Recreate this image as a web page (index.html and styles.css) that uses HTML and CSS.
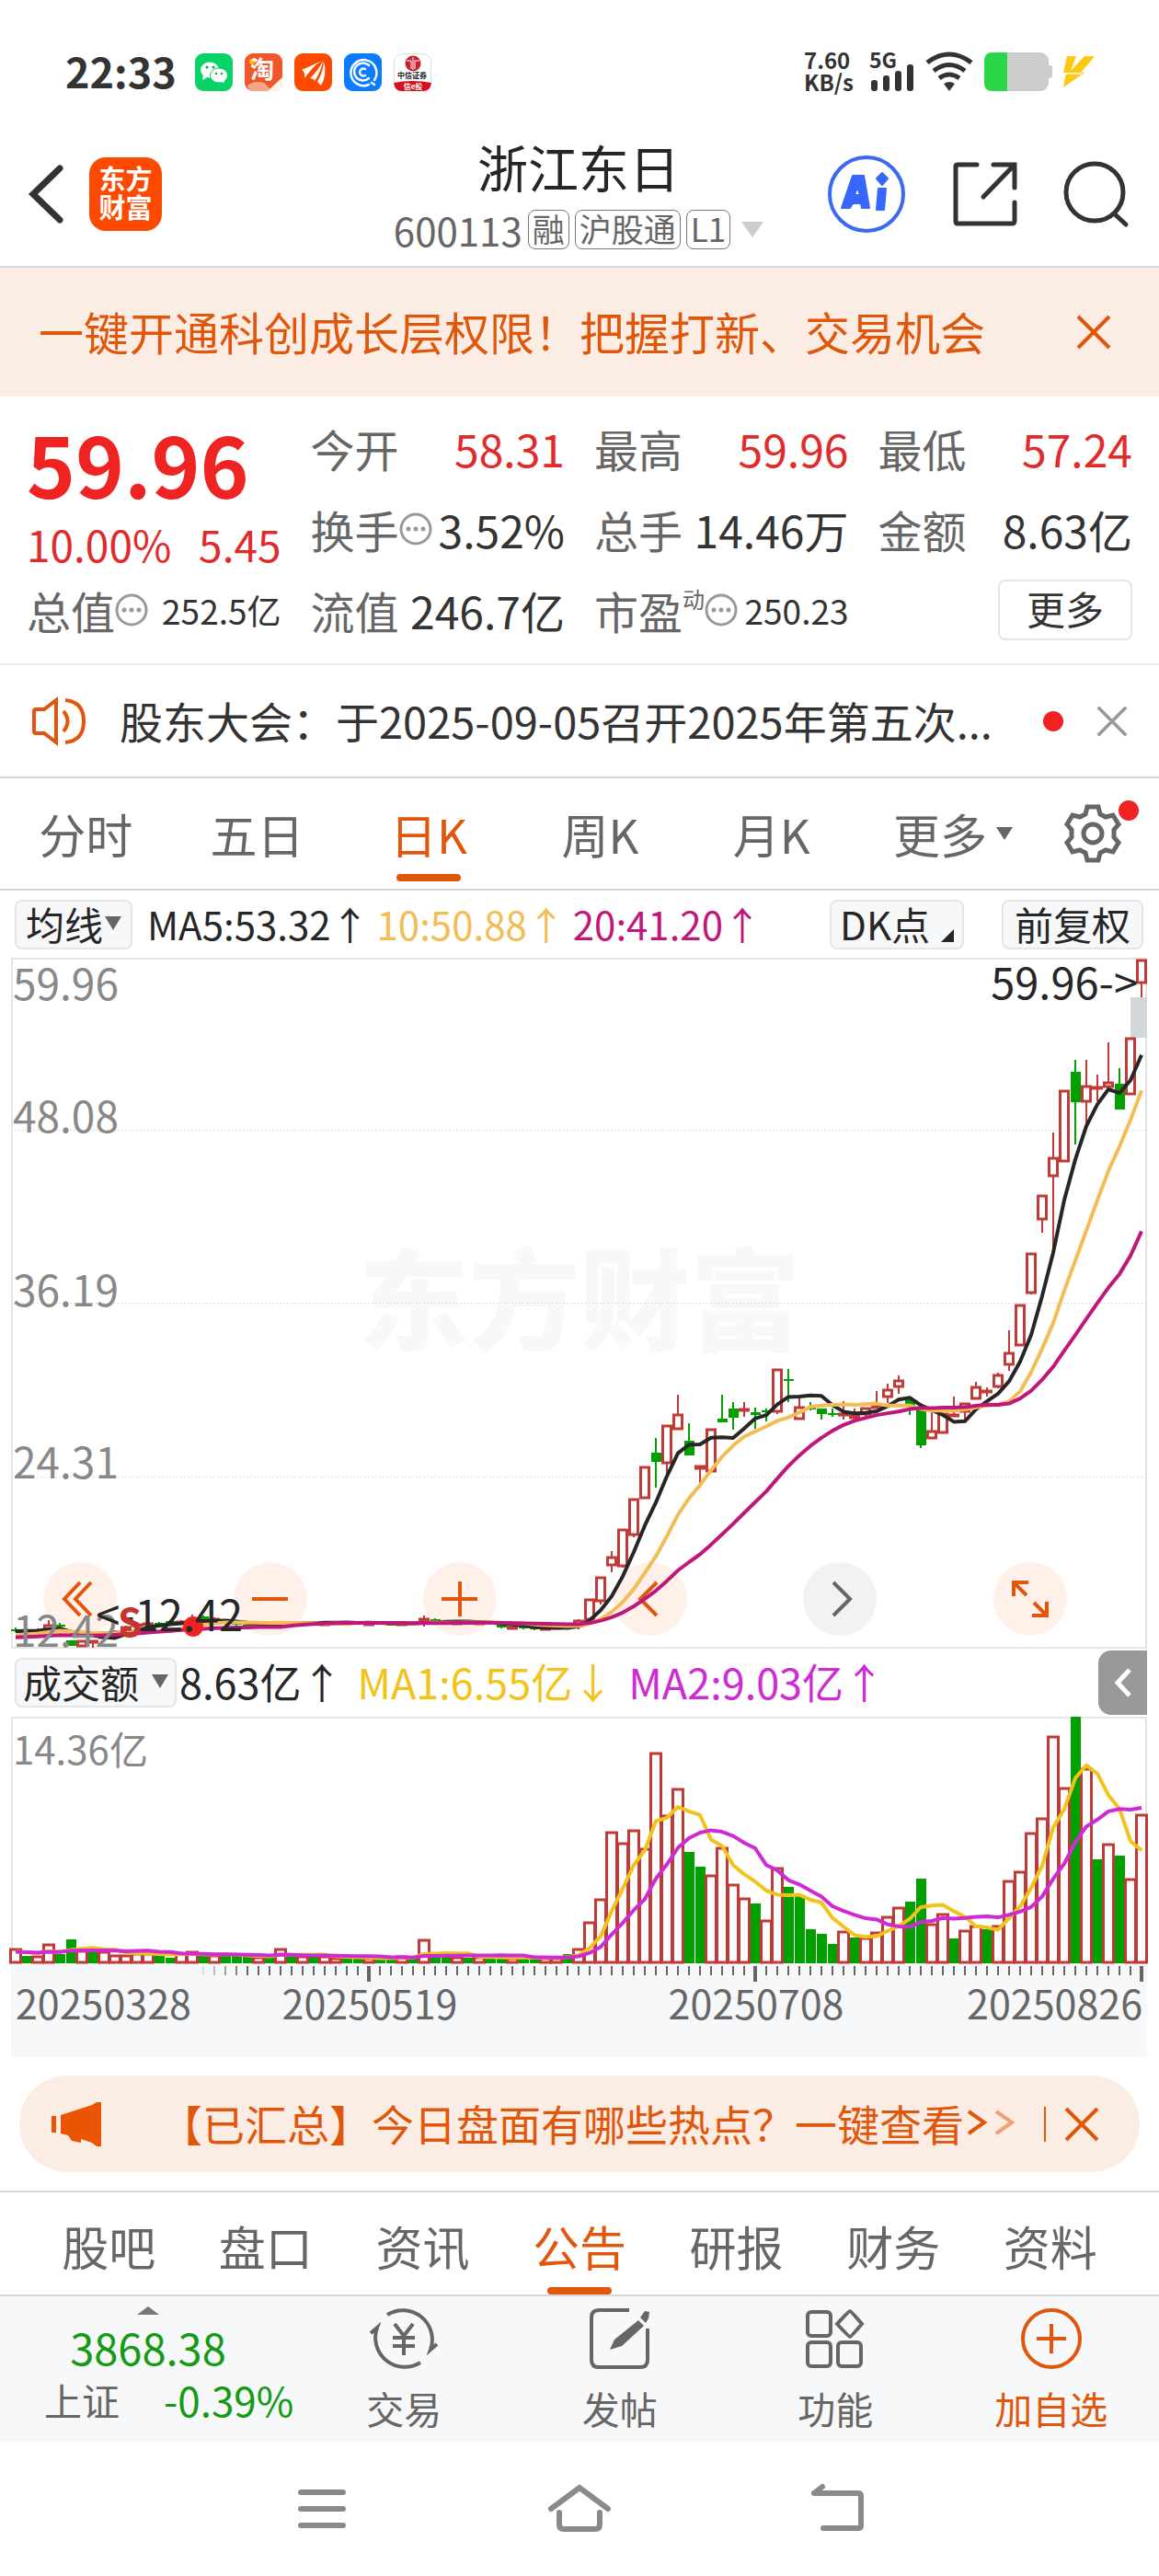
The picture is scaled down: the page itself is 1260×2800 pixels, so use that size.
FILE: index.html
```html
<!DOCTYPE html>
<html lang="zh-CN">
<head>
  <meta charset="UTF-8">
  <meta name="viewport" content="width=device-width, initial-scale=1.0">
  <title>浙江东日 600113</title>
  <link rel="stylesheet" href="styles.css">
</head>
<body>
  <svg class="defs" aria-hidden="true">
    <symbol id="close" viewBox="0 0 38 38"><path d="M2 2 36 36M36 2 2 36"/></symbol>
    <symbol id="dots" viewBox="0 0 36 36">
      <circle cx="18" cy="18" r="16" fill="none" stroke="#999" stroke-width="3"/>
      <g fill="#999"><circle cx="10" cy="18" r="2.500"/><circle cx="18" cy="18" r="2.500"/><circle cx="26" cy="18" r="2.500"/></g>
    </symbol>
  </svg>

  <!-- 状态栏 -->
  <div class="status">
    <span class="clock">22:33</span>
    <div class="apps">
      <svg viewBox="0 0 41 41">
        <rect width="41" height="41" rx="9" fill="#07d367"/>
        <ellipse cx="16" cy="18" rx="10" ry="8.500" fill="#fff"/><path d="M9 23 8 29 15 25Z" fill="#fff"/>
        <ellipse cx="26" cy="24" rx="9.500" ry="8" fill="#fff" stroke="#07d367"/><path d="m28 31 4 1-1-4Z" fill="#fff"/>
        <g fill="#07a555"><circle cx="13" cy="15" r="1.500"/><circle cx="20" cy="15" r="1.500"/><circle cx="23" cy="22" r="1.200"/><circle cx="29" cy="22" r="1.200"/></g>
      </svg>
      <svg viewBox="0 0 41 41">
        <rect width="41" height="41" rx="9" fill="#f0562a"/>
        <path d="M3 35q8-6 18-3l9 9H9q-5 0-6-6Z" fill="#f9a58a"/>
        <path d="M25 41 41 26v6q0 9-9 9Z" fill="#fff3e8"/>
        <circle cx="8" cy="9" r="3" fill="#ffc400"/>
        <text x="19" y="27" class="tao">淘</text>
      </svg>
      <svg viewBox="0 0 41 41">
        <rect width="41" height="41" rx="9" fill="#fd4a00"/>
        <path d="M8 18q9-4 22-10-6 3-11 9T11 27q1-7-3-9ZM17 27q9-8 14-19-2 12-9 22-1-3-5-3ZM25 31q6-10 7-22 4 14-3 26Z" fill="#fff"/>
      </svg>
      <svg viewBox="0 0 41 41">
        <rect width="41" height="41" rx="9" fill="#0a7dff"/>
        <g fill="none" stroke="#fff" stroke-width="2.500" stroke-linecap="round">
          <path d="M33 29a14 14 0 1 0-6 5M30 32l3 2"/><path d="M27 13a9.500 9.500 0 1 0 0 14"/><path d="M23 17a4 4 0 1 0 0 7"/>
        </g>
      </svg>
      <svg viewBox="0 0 41 41">
        <rect x=".5" y=".5" width="40" height="40" rx="9" fill="#fff" stroke="#ddd"/>
        <circle cx="21" cy="11" r="8.500" fill="#c8202c"/>
        <path d="M14 8h5v9M28 8h-5v9M21 4v14" stroke="#fff" fill="none"/>
        <path d="M0 32q20-4 41 0-1 9-9 9H9q-8 0-9-9Z" fill="#d7101c"/>
        <text x="20" y="27" class="zx">中信证券</text>
        <text x="21" y="39" class="zx zx-red">信e投</text>
      </svg>
    </div>
    <div class="net"><span>7.60</span><span>KB/s</span></div>
    <svg class="signal" viewBox="0 0 50 44">
      <text x="0" y="18">5G</text>
      <g fill="#333"><rect x="2" y="31" width="7" height="12" rx="3"/><rect x="15" y="26" width="7" height="17" rx="3"/><rect x="28" y="21" width="7" height="22" rx="3"/><rect x="41" y="14" width="7" height="29" rx="3"/></g>
    </svg>
    <svg class="wifi" viewBox="0 0 52 44" fill="none" stroke="#333" stroke-width="5">
      <path d="M2 12q24-18 48 0M9 21q17-13 34 0M15 29q11-8 22 0"/><path d="M20 35q6-4 12 0l-6 8Z" fill="#333" stroke="none"/>
    </svg>
    <svg class="battery" viewBox="0 0 74 42">
      <rect width="70" height="42" rx="9" fill="#ccc"/><rect x="68" y="14" width="6" height="14" rx="3" fill="#ccc"/>
      <path d="M9 0H25V42H9Q0 42 0 33V9Q0 0 9 0Z" fill="#2bd648"/>
    </svg>
    <svg class="bolt" viewBox="0 0 35 36"><path d="M5 1H15L9 17 24 1H35L20 19H24L1 35 4 19H1Z" fill="#fdc80f"/><path d="M3 20h18" stroke="#fff" stroke-width="1.500"/></svg>
  </div>

  <!-- 标题栏 -->
  <header class="topbar">
    <div class="side">
      <button class="icon-btn" aria-label="返回"><svg class="back" viewBox="0 0 38 64"><path d="M34 4 5 32 34 60" /></svg></button>
      <span class="logo">东方<br>财富</span>
    </div>
    <div class="title">
      <h1>浙江东日</h1>
      <div class="code"><span class="num">600113</span><span class="tag">融</span><span class="tag">沪股通</span><span class="tag">L1</span><i class="tri tri-light"></i></div>
    </div>
    <div class="side side-right">
      <button class="icon-btn" aria-label="AI"><svg class="ai" viewBox="0 0 86 86">
        <circle cx="43" cy="43" r="40" fill="none" stroke="#3d69f0" stroke-width="4"/>
        <path d="M28 23h12l6 35H38l-1-5H28l-3 5H16ZM33 35l-3 9h6Z" fill="#3766ff" stroke="#3766ff" stroke-width="2" stroke-linejoin="round"/>
        <path d="M56 37h8l-2 23H54ZM60 20l6 6-6 7-6-7Z" fill="#3766ff" stroke="#3766ff" stroke-width="2" stroke-linejoin="round"/>
      </svg></button>
      <button class="icon-btn" aria-label="分享"><svg class="share" viewBox="0 0 70 70"><path d="M26 3H5Q3 3 3 5V64Q3 67 5 67H64Q67 67 67 64V44M44 3H67V28M66 4 33 38"/></svg></button>
      <button class="icon-btn" aria-label="搜索"><svg class="search" viewBox="0 0 70 72"><circle cx="33" cy="34" r="31"/><path d="M54 57 67 69"/></svg></button>
    </div>
  </header>

  <div class="banner">
    <a href="#">一键开通科创成长层权限！把握打新、交易机会</a>
    <button class="icon-btn" aria-label="关闭"><svg class="x"><use href="#close"/></svg></button>
  </div>

  <!-- 行情 -->
  <section class="quote">
    <div class="col">
      <div class="price">59.96</div>
      <div class="cell red change"><span>10.00%</span><span>5.45</span></div>
      <div class="cell"><span class="label">总值<svg class="dots"><use href="#dots"/></svg></span><span class="small">252.5亿</span></div>
    </div>
    <div class="col">
      <div class="cell"><span class="label">今开</span><span class="red">58.31</span></div>
      <div class="cell"><span class="label">换手<svg class="dots"><use href="#dots"/></svg></span><span>3.52%</span></div>
      <div class="cell"><span class="label">流值</span><span>246.7亿</span></div>
    </div>
    <div class="col">
      <div class="cell"><span class="label">最高</span><span class="red">59.96</span></div>
      <div class="cell"><span class="label">总手</span><span>14.46万</span></div>
      <div class="cell"><span class="label">市盈<sup>动</sup><svg class="dots"><use href="#dots"/></svg></span><span class="small">250.23</span></div>
    </div>
    <div class="col">
      <div class="cell"><span class="label">最低</span><span class="red">57.24</span></div>
      <div class="cell"><span class="label">金额</span><span>8.63亿</span></div>
      <div class="cell cell-end"><button class="more">更多</button></div>
    </div>
  </section>

  <div class="notice">
    <svg class="speaker" viewBox="0 0 60 52"><path d="M3 15q0-2 2-2H14L27 3V49L14 39H5Q3 39 3 37ZM35 15q9 11 0 22M37 3q20 2 20 23T37 49"/></svg>
    <a href="#">股东大会：于2025-09-05召开2025年第五次...</a>
    <i class="dot"></i>
    <button class="icon-btn" aria-label="关闭"><svg class="x x-gray"><use href="#close"/></svg></button>
  </div>

  <!-- 周期切换 -->
  <nav class="tabs tabs-period">
    <button>分时</button>
    <button>五日</button>
    <button class="active">日K</button>
    <button>周K</button>
    <button>月K</button>
    <button class="tab-more">更多<i class="tri tri-small"></i></button>
    <button class="settings" aria-label="设置">
      <svg viewBox="0 0 64 64"><path d="M26 3H38L40 11 46 14 54 12 60 22 55 28V36L60 42 54 52 46 50 40 53 38 61H26L24 53 18 50 10 52 4 42 9 36V28L4 22 10 12 18 14 24 11Z"/><circle cx="32" cy="32" r="10"/></svg>
      <i class="dot badge"></i>
    </button>
  </nav>

  <section class="chart">
    <div class="legend">
      <button class="chip">均线<i class="tri"></i></button>
      <span class="ma">MA5:53.32↑</span>
      <span class="ma gold">10:50.88↑</span>
      <span class="ma pink">20:41.20↑</span>
      <button class="chip chip-dk">DK点<i class="corner"></i></button>
      <button class="chip chip-fq">前复权</button>
    </div>
    <div class="plot">
      <div class="controls">
        <button aria-label="最早"><svg viewBox="0 0 80 80"><path d="M40 22 23 40 40 58M52 22 35 40 52 58"/></svg></button>
        <button aria-label="缩小"><svg viewBox="0 0 80 80"><path d="M20 40H59"/></svg></button>
        <button aria-label="放大"><svg viewBox="0 0 80 80"><path d="M20 40H59M40 21V59"/></svg></button>
        <button aria-label="向左"><svg viewBox="0 0 80 80"><path d="M47 22 29 40 47 58"/></svg></button>
        <button class="off" aria-label="向右"><svg viewBox="0 0 80 80"><path d="M33 22 51 40 33 58"/></svg></button>
        <button aria-label="全屏"><svg viewBox="0 0 80 80"><path d="M22 37V22H38M23 23 36 36M58 43V58H42M57 57 44 44"/></svg></button>
      </div>
      <svg id="kline" class="kline" viewBox="0 0 1235 750"></svg>
    </div>
    <div class="legend legend-vol">
      <button class="chip chip-vol">成交额<i class="tri"></i></button>
      <span class="ma">8.63亿↑</span>
      <span class="ma yellow">MA1:6.55亿↓</span>
      <span class="ma purple">MA2:9.03亿↑</span>
      <button class="fold" aria-label="展开"><svg viewBox="0 0 20 34"><path d="M17 3 4 17 17 31"/></svg></button>
    </div>
    <svg id="volume" class="volume" viewBox="0 0 1235 370"></svg>
  </section>

  <div class="tip">
    <svg class="horn" viewBox="0 0 54 48"><path d="M0 15H5V33H0ZM10 14 44 3 49 0H54V48H49L44 44 32 40V44L22 42 18 36 10 34Z"/></svg>
    <a href="#">【已汇总】今日盘面有哪些热点？一键查看<svg class="arrows" viewBox="0 0 54 30"><path d="M3 3 20 15 3 27"/><path d="M33 3 50 15 33 27" opacity=".5"/></svg></a>
    <button class="icon-btn" aria-label="关闭"><svg class="x"><use href="#close"/></svg></button>
  </div>

  <nav class="tabs tabs-info">
    <button>股吧</button>
    <button>盘口</button>
    <button>资讯</button>
    <button class="active">公告</button>
    <button>研报</button>
    <button>财务</button>
    <button>资料</button>
  </nav>

  <!-- 底部工具栏 -->
  <footer class="toolbar">
    <a class="index" href="#">
      <i class="tri-up"></i>
      <span class="index-value">3868.38</span>
      <span class="index-row"><span>上证</span><span class="green percent">-0.39%</span></span>
    </a>
    <button><svg viewBox="0 0 76 68"><path d="M20 8A32 32 0 0 1 67 46l7-6M56 60A32 32 0 0 1 9 22L2 28M28 18 38 31 48 18M38 31V52M26 33H50M26 42H50"/></svg>交易</button>
    <button><svg viewBox="0 0 76 68"><path d="M48 3H15Q7 3 7 11V57Q7 65 15 65H60Q68 65 68 57V23"/><path class="solid" d="M58 14 64 20 40 42 27 46 32 35ZM60 11 65 4 70 5 69 12 66 17Z"/></svg>发帖</button>
    <button><svg viewBox="0 0 76 68"><rect x="8" y="5" width="25" height="26" rx="4"/><rect x="8" y="38" width="25" height="26" rx="4"/><rect x="41" y="38" width="25" height="26" rx="4"/><path d="M54 4Q55 4 67 18 55 32 54 32 53 32 40 18 53 4 54 4Z"/></svg>功能</button>
    <button class="orange"><svg viewBox="0 0 76 68"><circle cx="38" cy="34" r="31"/><path d="M22 34H54M38 18V50"/></svg>加自选</button>
  </footer>

  <div class="sysnav">
    <button aria-label="菜单"><svg viewBox="0 0 70 56"><path d="M12 10H58M12 28H58M12 46H58"/></svg></button>
    <button aria-label="主页"><svg viewBox="0 0 70 56"><path d="M4 28 35 5 66 28M13 32V45Q13 50 18 50H52Q57 50 57 45V32"/></svg></button>
    <button aria-label="后退"><svg viewBox="0 0 70 56"><path d="M10 11H58Q61 11 61 14V46Q61 49 58 49H20M10 11 19 4"/></svg></button>
  </div>

  <script>
    // [开, 收, 高, 低, 成交额]，价格为图内纵坐标
    const days = [
      [730,730,728,733,16],[730,732,729,733,8],[732,731,729,733,8],[731,725,720,731,21],[725,727,723,729,10],
      [742,748,742,748,26],[749,742,742,749,14],[743,742,742,750,13],[740,733,733,740,13],[733,732,731,734,9],
      [732,727,726,732,9],[726,724,722,732,11],[725,723,722,728,11],[723,724,722,727,10],[721,725,720,726,6],
      [723,721,720,724,11],[724,719,714,726,13],[716,721,715,722,9],[720,718,717,722,9],[722,724,720,725,8],
      [723,725,722,726,8],[725,726,723,727,8],[727,725,723,728,7],[725,726,724,727,7],[725,722,721,726,16],
      [722,723,722,725,8],[723,722,721,724,8],[722,724,721,725,7],[724,723,722,725,8],[723,722,722,725,6],
      [723,722,721,724,6],[722,724,722,725,5],[724,723,722,725,6],[723,724,722,725,5],[724,725,723,726,5],
      [725,723,722,725,8],[722,724,722,725,6],[723,718,715,727,26],[719,721,718,722,7],[721,723,720,724,8],
      [724,722,721,725,7],[722,723,721,724,6],[723,722,721,724,7],[722,724,721,725,6],[724,728,723,729,6],
      [728,727,726,729,6],[727,728,727,730,6],[728,730,727,731,6],[730,728,727,731,6],[729,727,726,730,6],
      [727,729,726,730,10],[727,720,719,730,16],[720,697,697,720,45],[700,673,673,703,70],[661,651,645,668,143],
      [662,621,621,663,131],[628,588,588,630,145],[588,553,553,588,125],[538,548,522,576,229],[550,508,508,563,161],
      [513,496,475,513,190],[525,541,506,541,121],[556,552,552,576,105],[559,512,512,559,96],[501,505,475,505,126],
      [490,500,483,513,86],[493,490,483,499,71],[494,497,489,512,65],[492,494,490,504,47],[494,447,447,496,104],
      [458,459,447,483,83],[502,488,477,502,74],[489,491,483,492,37],[490,496,490,502,32],[495,497,490,499,21],
      [498,495,482,502,35],[501,497,490,501,28],[497,489,489,498,28],[490,487,471,490,34],[478,469,463,484,51],
      [467,459,454,474,61],[480,487,480,497,67],[491,530,491,533,92],[523,514,492,523,43],[517,495,495,517,54],
      [498,496,477,498,27],[494,484,484,503,36],[480,466,461,480,41],[472,470,467,477,37],[467,453,451,468,41],
      [443,429,405,449,90],[422,377,377,422,100],[365,321,321,366,142],[285,258,258,299,158],[238,217,190,317,247],
      [222,144,144,222,191],[124,157,111,203,268],[157,139,111,180,212],[143,140,127,156,113],[141,135,92,141,130],
      [137,165,120,165,117],[149,87,87,149,92],[28,2,2,43,162]
    ];
    const STEP = 12, START = 5, RED = '#c03a38', GREEN = '#00a000';
    const x = i => START + i * STEP;

    function average(values, n, seed) {
      const all = seed.concat(values);
      return values.map((v, i) => {
        const end = i + seed.length + 1;
        const part = all.slice(end - n, end);
        return part.reduce((a, b) => a + b, 0) / n;
      });
    }
    function line(ys, color) {
      const pts = ys.map((y, i) => `${x(i)},${y.toFixed(1)}`).join(' ');
      return `<polyline points="${pts}" fill="none" stroke="${color}" stroke-width="4" stroke-linejoin="round"/>`;
    }
    // 阳线空心，阴线实心
    function box(i, top, height, up, w) {
      return up
        ? `<rect x="${x(i) - w / 2}" y="${top + 1}" width="${w}" height="${Math.max(height - 2, 1)}" fill="#fff" stroke="${RED}" stroke-width="3"/>`
        : `<rect x="${x(i) - 5}" y="${top}" width="11" height="${Math.max(height, 2)}" fill="${GREEN}"/>`;
    }

    // K线
    function drawKline() {
      const closes = days.map(d => d[1]);
      const seed = Array(15).fill(741).concat([733, 733, 732, 732]);
      let s = '<text x="618" y="418" class="watermark">东方财富</text>';
      [187, 375, 564].forEach(y => s += `<path d="M0 ${y}.5H1235" stroke="#ddd" stroke-dasharray="2 2"/>`);
      s += '<path d="M1 750V1H1234V750Z" fill="none" stroke="#e4e4e4" stroke-width="2"/>';
      s += '<rect x="1217" y="43" width="18" height="44" fill="#d3d7dc"/>';
      days.forEach(([open, close, high, low], i) => {
        const up = close < open, top = Math.min(open, close), h = Math.abs(open - close);
        s += `<path d="M${x(i)} ${high}V${low}" stroke="${up ? RED : GREEN}" stroke-width="2"/>` + box(i, top, h, up, 9);
      });
      s += line(average(closes, 5, seed), '#262626');
      s += line(average(closes, 10, seed), '#f3bc54');
      s += line(average(closes, 20, seed), '#c0187a');
      [['59.96', 46], ['48.08', 190], ['36.19', 379], ['24.31', 566], ['12.42', 749]].forEach(([t, y]) =>
        s += `<text x="2" y="${y}" class="scale">${t}</text>`);
      s += '<circle cx="198" cy="727" r="11" fill="#f02323"/><circle cx="194" cy="730" r="3" fill="#333"/>';
      s += '<text x="252" y="732" class="mark">&lt;-12.42</text><text x="116" y="738" class="sell">S</text>';
      s += '<text x="1225" y="45" class="mark">59.96-&gt;</text>';
      document.getElementById('kline').innerHTML = s;
    }

    // 成交额
    function drawVolume() {
      const vols = days.map(d => d[4]), seed = Array(9).fill(12);
      let s = '<rect y="268" width="1235" height="102" fill="#f7f8fa"/><path d="M1 268V1H1234V268" fill="none" stroke="#e4e4e4" stroke-width="2"/>';
      days.forEach((d, i) => {
        const up = i === 0 || d[1] < days[i - 1][1];
        s += box(i, 268 - d[4], d[4], up, 11);
      });
      s += line(average(vols, 5, seed).map(v => 268 - v), '#f2c31a');
      s += line(average(vols, 10, seed).map(v => 268 - v), '#cf2bd4');
      for (let i = 17; i < days.length; i++) {
        const major = i === 32 || i === 67 || i === 102;
        s += `<path d="M${x(i)} 271V${major ? 288 : 281}" stroke="#666" stroke-width="${major ? 4 : 2}" opacity="${Math.min(1, (i - 16) / 5)}"/>`;
      }
      s += '<text x="2" y="52" class="scale scale-vol">14.36亿</text>';
      s += '<text x="5" y="329" class="date">20250328</text><text x="390" y="329" class="date mid">20250519</text>';
      s += '<text x="810" y="329" class="date mid">20250708</text><text x="1230" y="329" class="date end">20250826</text>';
      document.getElementById('volume').innerHTML = s;
    }

    drawKline();
    drawVolume();
  </script>
</body>
</html>
```
FILE: styles.css
```css
* {
  box-sizing: border-box;
  margin: 0;
  padding: 0;
}
body {
  display: flex;
  flex-direction: column;
  min-height: 100vh;
  background: #fff;
  color: #333;
  font-family: "Noto Sans CJK SC", sans-serif;
  font-size: 46px;
  line-height: 1;
}
button {
  border: none;
  background: none;
  color: inherit;
  font: inherit;
  cursor: pointer;
}
a {
  color: inherit;
  text-decoration: none;
  white-space: nowrap;
}
svg { display: block; flex: none; overflow: visible; }
.defs { position: absolute; width: 0; height: 0; }
.icon-btn { display: flex; align-items: center; }
.red { color: #e12a2a; }
.green { color: #149a14; }
.orange { color: #e0570c; }
.x { width: 38px; height: 38px; stroke: #e0570c; stroke-width: 4; }
.x-gray { width: 34px; height: 34px; stroke: #999; }
.dot {
  width: 22px;
  height: 22px;
  border-radius: 50%;
  background: #f02323;
}
.tri {
  border: 9px solid transparent;
  border-top: 15px solid #666;
  border-bottom: none;
}
.tri-light { border-width: 17px 12px 0; border-top-color: #ccc; margin-left: 6px; }
.tri-small { border-width: 14px 9px 0; }

/* 状态栏 */
.status {
  display: flex;
  align-items: center;
  height: 156px;
  padding: 0 70px 0 71px;
}
.clock { padding-bottom: 4px; font-size: 45px; font-weight: 700; }
.apps { display: flex; gap: 13px; margin: 0 auto 0 20px; }
.apps svg { width: 41px; height: 41px; }
.tao { font-size: 26px; font-weight: 700; fill: #fff; text-anchor: middle; }
.zx { font-size: 8px; font-weight: 700; fill: #222; text-anchor: middle; }
.zx-red { fill: #fff; }
.net {
  display: flex;
  flex-direction: column;
  width: 71px;
  padding-bottom: 2px;
  font-size: 24px;
  font-weight: 700;
}
.signal { width: 50px; height: 44px; margin-right: 11px; }
.signal text { font-size: 23px; font-weight: 700; fill: #333; }
.wifi { width: 52px; height: 44px; margin-right: 12px; }
.battery { width: 74px; height: 42px; margin-right: 11px; }
.bolt { width: 35px; height: 36px; }

/* 标题栏 */
.topbar {
  display: flex;
  align-items: center;
  justify-content: space-between;
  height: 135px;
  padding: 0 33px 24px 31px;
  border-bottom: 2px solid #d4d8dc;
}
.topbar svg { fill: none; stroke: #333; stroke-width: 5; stroke-linecap: round; }
.side { display: flex; align-items: center; flex: 1; gap: 28px; }
.side-right { justify-content: flex-end; gap: 51px; }
.topbar .back { width: 38px; height: 64px; stroke-width: 7; }
.logo {
  width: 79px;
  padding: 7px 0 11px;
  border-radius: 18px;
  background: #fd4a00;
  color: #fff;
  font-size: 29px;
  font-weight: 700;
  line-height: 31px;
  text-align: center;
}
.topbar .ai { width: 86px; height: 86px; stroke: none; }
.share { width: 70px; height: 70px; }
.search { width: 70px; height: 72px; }
.title {
  display: flex;
  flex-direction: column;
  align-items: center;
  gap: 18px;
}
h1 { color: #262626; font-size: 55px; font-weight: 400; line-height: 60px; }
.code { display: flex; align-items: center; gap: 6px; color: #666; font-size: 42px; }
.tag {
  padding: 1px 4px 5px;
  border: 1px solid #777;
  border-radius: 8px;
  font-size: 35px;
}

.banner {
  display: flex;
  align-items: center;
  justify-content: space-between;
  height: 140px;
  padding: 0 52px 0 42px;
  background: #fcede4;
  color: #e0570c;
  font-size: 49px;
}
.banner a, .tip a { padding-bottom: 4px; }

/* 行情 */
.quote {
  display: grid;
  grid-template-columns: repeat(4, 1fr);
  column-gap: 32px;
  padding: 12px 29px 14px;
  border-bottom: 2px solid #eee;
}
.col { display: flex; flex-direction: column; justify-content: flex-end; }
.price {
  height: 120px;
  color: #f02323;
  font-size: 90px;
  font-weight: 700;
  line-height: 120px;
}
.cell {
  display: flex;
  align-items: center;
  justify-content: space-between;
  height: 88px;
  font-size: 48px;
  white-space: nowrap;
}
.change { height: 56px; font-size: 46px; }
.cell-end { justify-content: flex-end; }
.label { display: flex; align-items: center; color: #666; font-size: 48px; }
.label sup { align-self: flex-start; font-size: 24px; }
.dots { width: 36px; height: 36px; }
.small { font-size: 37px; }
.more {
  width: 146px;
  height: 66px;
  padding-bottom: 4px;
  border: 2px solid #e6e6e6;
  border-radius: 8px;
  font-size: 42px;
}

.notice {
  display: flex;
  align-items: center;
  height: 123px;
  padding: 0 34px;
  border-bottom: 2px solid #d8d8d8;
}
.notice a { flex: 1; margin-left: 36px; padding-bottom: 2px; font-size: 47px; }
.notice .dot { margin-right: 36px; }
.speaker { width: 60px; height: 52px; fill: none; stroke: #e0570c; stroke-width: 4; }

/* 标签 */
.tabs {
  display: flex;
  height: 122px;
  border-bottom: 2px solid #d8d8d8;
  color: #666;
  font-size: 51px;
}
.tabs button {
  display: flex;
  position: relative;
  flex: 1;
  align-items: center;
  justify-content: center;
  gap: 10px;
  white-space: nowrap;
}
.tabs .active { color: #e0570c; }
.tabs .active::after {
  position: absolute;
  bottom: 8px;
  left: 50%;
  width: 70px;
  height: 8px;
  margin-left: -35px;
  border-radius: 4px;
  background: #e0570c;
  content: "";
}
.tabs-period {
  display: grid;
  grid-template-columns: repeat(5, 1fr) 184px 144px;
}
.tabs .tab-more { padding-left: 24px; }
.settings svg { width: 64px; height: 64px; fill: none; stroke: #666; stroke-width: 5; }
.settings .badge { position: absolute; top: 24px; right: 22px; }

/* 图表 */
.chart { margin: 0 13px 0 12px; }
.legend {
  display: flex;
  align-items: center;
  height: 73px;
  padding: 0 4px;
  color: #262626;
  font-size: 42px;
  white-space: nowrap;
}
.legend-vol { height: 75px; padding-right: 0; font-size: 45px; }
.chip {
  display: flex;
  align-items: center;
  justify-content: center;
  width: 128px;
  height: 54px;
  margin-right: 16px;
  padding-bottom: 2px;
  border: 2px solid #e4e6ea;
  border-radius: 8px;
  background: #f7f8fa;
  font-size: 42px;
}
.chip .tri { margin-left: 2px; }
.chip-dk { width: 146px; margin: 0 41px 0 auto; }
.chip-fq { width: 154px; margin: 0; }
.chip-vol { width: 176px; margin-right: 3px; }
.chip-vol .tri { margin-left: 14px; }
.corner {
  align-self: flex-end;
  margin: 0 0 4px 12px;
  border-bottom: 14px solid #262626;
  border-left: 14px solid transparent;
}
.ma { margin-right: 8px; padding-bottom: 2px; }
.legend-vol .ma { margin-right: 16px; }
.gold { color: #f3bc54; }
.pink { color: #c0187a; }
.yellow { color: #f2c31a; }
.purple { color: #cf2bd4; }
.fold {
  display: flex;
  align-items: center;
  justify-content: center;
  width: 53px;
  height: 70px;
  margin-left: auto;
  border-radius: 14px 0 0 14px;
  background: #999;
}
.fold svg { width: 20px; height: 34px; fill: none; stroke: #fff; stroke-width: 5; }
.plot { position: relative; }
.kline, .volume { position: relative; width: 100%; pointer-events: none; }
.controls {
  display: flex;
  position: absolute;
  right: 87px;
  bottom: 13px;
  left: 35px;
  justify-content: space-between;
}
.controls button {
  width: 80px;
  height: 80px;
  border-radius: 50%;
  background: #fff1ea;
  color: #e0570c;
}
.controls .off { background: #f2f2f2; color: #666; }
.controls svg { fill: none; stroke: currentColor; stroke-width: 4; }
.scale { font-size: 46px; fill: #888; }
.scale-vol { font-size: 42px; }
.mark { font-size: 47px; fill: #262626; text-anchor: end; }
.sell { font-size: 42px; font-weight: 700; fill: #c8322f; }
.date { font-size: 43px; fill: #666; }
.mid { text-anchor: middle; }
.end { text-anchor: end; }
.watermark { font-size: 120px; font-weight: 900; fill: #f8f8f8; text-anchor: middle; }

.tip {
  display: flex;
  align-items: center;
  height: 105px;
  margin: 20px 21px;
  padding: 0 44px 0 35px;
  border-radius: 52px;
  background: #fcede4;
  color: #e0570c;
}
.tip a {
  display: flex;
  flex: 1;
  align-items: center;
  margin-left: 64px;
}
.tip button { padding-left: 20px; border-left: 2px solid #e0570c; }
.horn { width: 54px; height: 48px; fill: #ea5504; }
.arrows { width: 54px; height: 30px; margin-left: 2px; fill: none; stroke: #e0570c; stroke-width: 4; }

.tabs-info { height: 115px; padding: 0 33px; border-top: 2px solid #d4d8dc; }
.tabs-info button { padding-top: 6px; }
.tabs-info .active::after { bottom: 0; }

/* 底部工具栏 */
.toolbar {
  display: flex;
  height: 158px;
  background: #f6f8f9;
  color: #666;
  font-size: 41px;
}
.toolbar button, .index {
  display: flex;
  flex: 1;
  flex-direction: column;
  align-items: center;
}
.toolbar button { gap: 21px; padding-top: 12px; }
.toolbar button svg {
  width: 76px;
  height: 68px;
  fill: none;
  stroke: currentColor;
  stroke-width: 4;
}
.toolbar .solid { fill: currentColor; stroke: none; }
.toolbar .index { flex: 0 0 322px; padding-top: 11px; }
.tri-up { border: 12px solid transparent; border-top: none; border-bottom: 9px solid #777; }
.index-value { margin-top: 11px; color: #149a14; font-size: 47px; }
.index-row { display: flex; gap: 48px; align-items: center; margin-top: 12px; padding-left: 48px; align-self: flex-start; }
.percent { font-size: 44px; }

.sysnav {
  display: flex;
  flex: 1;
  align-items: center;
  padding: 0 210px;
  color: #8a8a8a;
}
.sysnav button { display: flex; flex: 1; justify-content: center; }
.sysnav svg {
  width: 70px;
  height: 56px;
  fill: none;
  stroke: currentColor;
  stroke-width: 6;
  stroke-linecap: round;
}
```
